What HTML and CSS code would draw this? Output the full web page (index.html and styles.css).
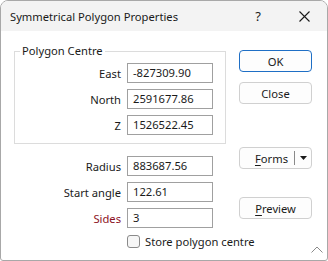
FILE: index.html
```html
<!DOCTYPE html>
<html>
<head>
<meta charset="utf-8">
<link rel="stylesheet" href="styles.css">
</head>
<body>
<div class="window">
  <div class="titlebar">
    <div class="title">Symmetrical Polygon Properties</div>
    <div class="capbtn help">?</div>
    <div class="capbtn close">
      <svg width="11" height="11" viewBox="0 0 11 11"><path d="M0.5 0.5 L10.5 10.5 M10.5 0.5 L0.5 10.5" stroke="#1a1a1a" stroke-width="1.1" fill="none"/></svg>
    </div>
  </div>
  <div class="content">
    <div class="left">
      <fieldset class="group">
        <legend>Polygon Centre</legend>
        <div class="row"><label class="lbl">East</label><div class="input">-827309.90</div></div>
        <div class="row"><label class="lbl">North</label><div class="input">2591677.86</div></div>
        <div class="row"><label class="lbl">Z</label><div class="input">1526522.45</div></div>
      </fieldset>
      <div class="rows">
        <div class="row"><label class="lbl wide">Radius</label><div class="input">883687.56</div></div>
        <div class="row"><label class="lbl wide">Start angle</label><div class="input">122.61</div></div>
        <div class="row"><label class="lbl wide req">Sides</label><div class="input">3</div></div>
        <div class="check"><span class="box"></span><span class="check-text">Store polygon centre</span></div>
      </div>
    </div>
    <div class="right">
      <div class="btn default">OK</div>
      <div class="btn gap10">Close</div>
      <div class="btn split"><span class="split-text"><u>F</u>orms</span><span class="sep"></span><span class="arrow"><svg width="7" height="4" viewBox="0 0 7 4"><path d="M0 0 H7 L3.5 4 Z" fill="#1a1a1a"/></svg></span></div>
      <div class="btn preview"><u>P</u>review</div>
    </div>
  </div>
  <svg class="grip" width="12" height="7" viewBox="0 0 12 7"><path d="M0.5 6.5 L6 1 L11.5 6.5" stroke="#8a8a8a" stroke-width="1" fill="none"/></svg>
</div>
</body>
</html>
```
FILE: styles.css
```css
html, body {
  margin: 0;
  padding: 0;
  background: #ffffff;
}
body {
  font-family: "Noto Sans", "Open Sans", sans-serif;
  font-size: 11.2px;
  color: #1a1a1a;
}
.window {
  position: relative;
  width: 328px;
  height: 261px;
  box-sizing: border-box;
  border: 1px solid #a8a8a8;
  border-radius: 8px 8px 3px 3px;
  overflow: hidden;
  background: #ffffff;
  display: flex;
  flex-direction: column;
}
.titlebar {
  height: 30px;
  flex: none;
  background: #f3f3f3;
  display: flex;
  align-items: center;
  padding-left: 9px;
}
.title {
  flex: 1;
  color: #1a1a1a;
}
.capbtn {
  width: 46px;
  height: 30px;
  display: flex;
  align-items: center;
  justify-content: center;
}
.help {
  font-size: 13px;
}
.content {
  flex: 1;
  display: flex;
  padding: 13px 0 0 13px;
}
.left {
  width: 212px;
  flex: none;
}
.group {
  margin: 0;
  padding: 0 0 8px 0;
  border: 1px solid #dcdcdc;
  border-radius: 0;
}
.group legend {
  margin-left: 5px;
  padding: 0 2px;
  line-height: 14px;
  height: 14px;
}
.group .row:first-of-type {
  margin-top: 5px;
}
.row {
  display: flex;
  align-items: center;
  height: 20px;
  margin-top: 6px;
}
.lbl {
  width: 106px;
  text-align: right;
  margin-right: 6px;
}
.lbl.wide {
  width: 107px;
}
.req {
  color: #8c1023;
}
.input {
  width: 86px;
  height: 20px;
  box-sizing: border-box;
  border: 1px solid #a0a0a0;
  padding-left: 5px;
  line-height: 18px;
}
.rows {
  padding-top: 6px;
}
.check {
  display: flex;
  align-items: center;
  margin-top: 6px;
  padding-left: 113px;
  height: 14px;
  width: 260px;
}
.box {
  flex: none;
  width: 13px;
  height: 13px;
  box-sizing: border-box;
  border: 1px solid #8a8a8a;
  border-radius: 3px;
  background: #f6f6f6;
  margin-right: 5px;
}
.check-text {
  white-space: nowrap;
}
.right {
  margin-left: 13px;
  padding-top: 6px;
  display: flex;
  flex-direction: column;
}
.btn {
  width: 73px;
  height: 22px;
  box-sizing: border-box;
  border: 1px solid #d0d0d0;
  border-radius: 4px;
  background: #fdfdfd;
  display: flex;
  align-items: center;
  justify-content: center;
}
.btn.default {
  border-color: #1f6fc5;
}
.gap10 {
  margin-top: 10px;
}
.split {
  margin-top: 43px;
  justify-content: flex-end;
}
.split-text {
  margin-right: 6px;
}
.sep {
  width: 1px;
  height: 14px;
  background: #8a8a8a;
}
.arrow {
  width: 16px;
  display: flex;
  justify-content: center;
}
.preview {
  margin-top: 28px;
}
u {
  text-decoration-thickness: 1px;
  text-underline-offset: 2px;
}
.grip {
  position: absolute;
  right: 4px;
  bottom: 7px;
}
```
